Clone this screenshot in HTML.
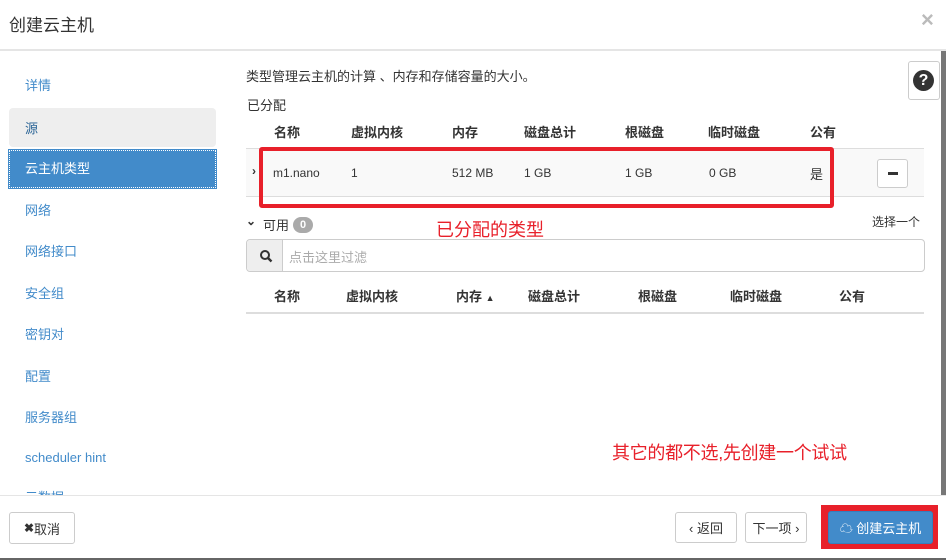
<!DOCTYPE html>
<html><head><meta charset="utf-8"><style>
*{margin:0;padding:0;box-sizing:border-box}
body{width:946px;height:560px;overflow:hidden;background:#fff;font-family:"Liberation Sans","Noto Sans CJK SC",sans-serif;font-size:13px;color:#333;position:relative}
.a{position:absolute;white-space:nowrap}
.nav{position:absolute;left:25px;color:#428bca;font-size:13px}
.th{position:absolute;font-weight:bold;font-size:13px;color:#333}
.td{position:absolute;font-size:12px;color:#333}
.btn{position:absolute;border:1px solid #ccc;border-radius:3px;background:#fff;font-size:13px;display:flex;align-items:center;justify-content:center}
</style></head><body>
<div class="a" style="left:9px;top:11px;font-size:17px;color:#333">创建云主机</div>
<div class="a" style="left:921px;top:7px;font-size:22px;color:#bbb;font-weight:bold">×</div>
<div class="a" style="left:0;top:49px;width:946px;height:2px;background:#e5e5e5"></div>
<div class="a" style="left:941px;top:51px;width:5px;height:444px;background:#777"></div>

<div class="nav" style="top:75px">详情</div>
<div class="a" style="left:9px;top:108px;width:207px;height:39px;background:#eee;border-radius:4px"></div>
<div class="nav" style="top:118px;color:#2a6496">源</div>
<div class="a" style="left:9px;top:150px;width:207px;height:38px;background:#428bca;border:1px dotted #fff;outline:1px solid #428bca"></div>
<div class="nav" style="top:158px;color:#fff">云主机类型</div>
<div class="nav" style="top:200px">网络</div>
<div class="nav" style="top:241px">网络接口</div>
<div class="nav" style="top:283px">安全组</div>
<div class="nav" style="top:324px">密钥对</div>
<div class="nav" style="top:366px">配置</div>
<div class="nav" style="top:407px">服务器组</div>
<div class="nav" style="top:450px;font-size:13px">scheduler hint</div>
<div class="nav" style="top:487px;height:9px;overflow:hidden">元数据</div>

<div class="a" style="left:246px;top:66px">类型管理云主机的计算 、内存和存储容量的大小。</div>
<div class="a" style="left:908px;top:61px;width:32px;height:39px;border:1px solid #ccc;border-radius:3px"></div>
<div class="a" style="left:913px;top:70px;width:21px;height:21px;border-radius:50%;background:#333;color:#fff;font-weight:bold;font-size:16px;text-align:center;line-height:21px">?</div>
<div class="a" style="left:247px;top:95px">已分配</div>
<div class="th" style="left:274px;top:122px">名称</div>
<div class="th" style="left:351px;top:122px">虚拟内核</div>
<div class="th" style="left:452px;top:122px">内存</div>
<div class="th" style="left:524px;top:122px">磁盘总计</div>
<div class="th" style="left:625px;top:122px">根磁盘</div>
<div class="th" style="left:708px;top:122px">临时磁盘</div>
<div class="th" style="left:810px;top:122px">公有</div>
<div class="a" style="left:246px;top:148px;width:678px;height:49px;background:#f9f9f9;border-top:1px solid #ddd;border-bottom:1px solid #ddd"></div>
<div class="td" style="left:252px;top:164px;font-weight:bold">›</div>
<div class="td" style="left:273px;top:166px">m1.nano</div>
<div class="td" style="left:351px;top:166px">1</div>
<div class="td" style="left:452px;top:166px">512 MB</div>
<div class="td" style="left:524px;top:166px">1 GB</div>
<div class="td" style="left:625px;top:166px">1 GB</div>
<div class="td" style="left:709px;top:166px">0 GB</div>
<div class="td" style="left:810px;top:164px;font-size:13px">是</div>
<div class="btn" style="left:877px;top:159px;width:31px;height:29px"><div style="width:10px;height:3px;background:#333"></div></div>
<div class="a" style="left:259px;top:147px;width:575px;height:61px;border:4px solid #e8202a;border-radius:3px"></div>

<div class="a" style="left:246px;top:214px;font-weight:bold;font-size:12px">⌄</div>
<div class="a" style="left:263px;top:215px">可用</div>
<div class="a" style="left:293px;top:217px;width:20px;height:16px;border-radius:8px;background:#aaa;color:#fff;font-size:11px;font-weight:bold;text-align:center;line-height:16px">0</div>
<div class="a" style="left:436px;top:216px;color:#e8202a;font-size:18px">已分配的类型</div>
<div class="a" style="left:872px;top:213px;font-size:12px">选择一个</div>
<div class="a" style="left:246px;top:239px;width:679px;height:33px;border:1px solid #ccc;border-radius:4px"></div>
<div class="a" style="left:247px;top:240px;width:36px;height:31px;background:#eee;border-right:1px solid #ccc;border-radius:4px 0 0 4px"></div>
<svg class="a" style="left:259px;top:249px" width="14" height="14" viewBox="0 0 14 14"><circle cx="6" cy="6" r="4" fill="none" stroke="#333" stroke-width="2"/><line x1="9" y1="9" x2="12.5" y2="12.5" stroke="#333" stroke-width="2.4"/></svg>
<div class="a" style="left:289px;top:247px;color:#aaa">点击这里过滤</div>
<div class="th" style="left:274px;top:286px">名称</div>
<div class="th" style="left:346px;top:286px">虚拟内核</div>
<div class="th" style="left:456px;top:286px">内存 <span style="font-size:9px">▲</span></div>
<div class="th" style="left:528px;top:286px">磁盘总计</div>
<div class="th" style="left:638px;top:286px">根磁盘</div>
<div class="th" style="left:730px;top:286px">临时磁盘</div>
<div class="th" style="left:839px;top:286px">公有</div>
<div class="a" style="left:246px;top:312px;width:678px;height:2px;background:#ddd"></div>

<div class="a" style="left:612px;top:439px;color:#e8202a;font-size:18px;letter-spacing:-0.3px">其它的都不选,先创建一个试试</div>

<div class="a" style="left:0;top:495px;width:946px;height:1px;background:#e5e5e5"></div>
<div class="btn" style="left:9px;top:512px;width:66px;height:32px"><b style="font-size:12px">✖</b>取消</div>
<div class="btn" style="left:675px;top:512px;width:62px;height:31px">‹ 返回</div>
<div class="btn" style="left:745px;top:512px;width:62px;height:31px">下一项 ›</div>
<div class="a" style="left:821px;top:505px;width:117px;height:44px;background:#e8202a"></div>
<div class="btn" style="left:828px;top:511px;width:105px;height:33px;background:#428bca;border-color:#357ebd;color:#fff">☁ 创建云主机</div>
<div class="a" style="left:0;top:558px;width:946px;height:2px;background:#666"></div>
</body></html>
